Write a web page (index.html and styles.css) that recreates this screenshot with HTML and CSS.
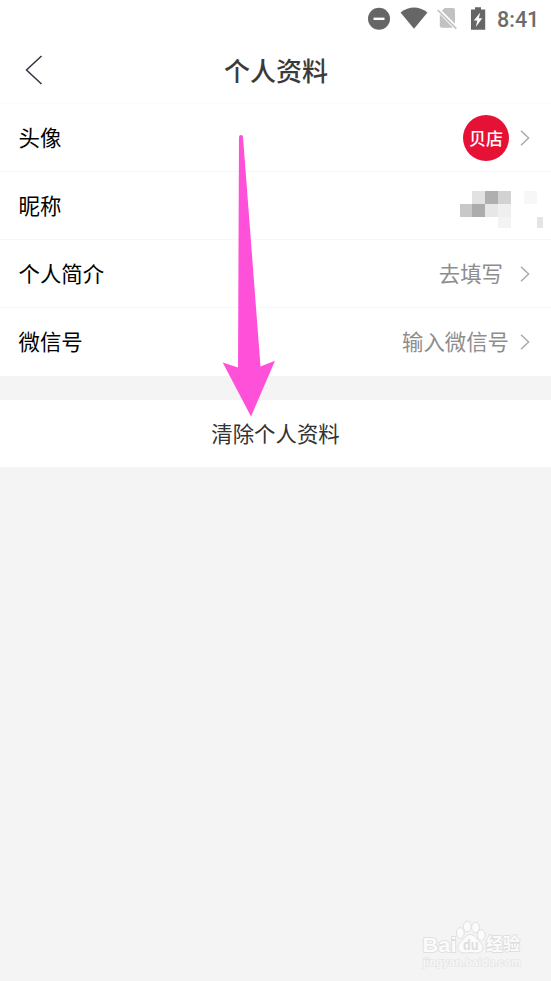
FILE: index.html
```html
<!DOCTYPE html>
<html lang="zh-CN">
<head>
<meta charset="utf-8">
<title>个人资料</title>
<link rel="stylesheet" href="styles.css">
</head>
<body>
<div class="screen">
  <div class="status">
    <svg class="status-icons" width="120" height="38" viewBox="367 0 120 38">
      <circle cx="379" cy="18.800" r="11" fill="#666"/>
      <path d="M373.500 18.800h11" stroke="#fff" stroke-width="2.400"/>
      <path d="M400.500 12.400Q414 2.800 427.500 12.400L414 28.800Z" fill="#666"/>
      <path d="M444.500 8H453q2 0 2 2v14.200L441.800 11zM439.800 14.200L453 27.800H442q-2.200 0-2.200-2z" fill="#c2c2c2"/>
      <path d="M438.500 8.500L458 28" stroke="#fff" stroke-width="1.600"/>
      <path d="M437.600 10L456.300 28.600" stroke="#c2c2c2" stroke-width="1.700"/>
      <path d="M475 7.300h6v2.200h4.200v20.200H471V9.500h4z" fill="#666"/>
      <path d="M480.300 12.500L473.800 20.500h3.500l-1.500 6.500 6.500-8.700h-3.500z" fill="#fff"/>
    </svg>
    <span class="clock">8:41</span>
  </div>
  <header class="header">
    <svg class="back" width="18" height="30" viewBox="0 0 18 30"><path d="M16.500 1L1.500 15L16.500 29" fill="none" stroke="#303642" stroke-width="1.500"/></svg>
    <h1 class="title">个人资料</h1>
  </header>
  <main>
    <div class="row first">
      <span class="label">头像</span>
      <span class="avatar">贝店</span>
      <svg class="chevron" width="10" height="16" viewBox="0 0 10 16"><path d="M1 .800L8.600 8L1 15.200" /></svg>
    </div>
    <div class="row nick">
      <span class="label">昵称</span>
      <svg class="mosaic" width="83" height="37" viewBox="460 191 83 37" shape-rendering="crispEdges">
        <path fill="#e2e2e2" d="M472 191h13v13h-13z"/><path fill="#afafaf" d="M485 191h13v13h-13z"/>
        <path fill="#d2d2d2" d="M498 191h13v13h-13z"/><path fill="#f7f7f7" d="M524 191h13v13h-13z"/>
        <path fill="#c8c8c8" d="M460 204h12v13h-12z"/><path fill="#acacac" d="M472 204h13v13h-13z"/>
        <path fill="#e7e7e7" d="M485 204h13v13h-13z"/><path fill="#efefef" d="M498 204h13v13h-13z"/>
        <path fill="#f3f3f3" d="M498 217h13v11h-13z"/><path fill="#e4e4e4" d="M537 217h6v11h-6z"/>
      </svg>
    </div>
    <div class="row">
      <span class="label">个人简介</span>
      <span class="value">去填写</span>
      <svg class="chevron" width="10" height="16" viewBox="0 0 10 16"><path d="M1 .800L8.600 8L1 15.200" /></svg>
    </div>
    <div class="row last">
      <span class="label">微信号</span>
      <span class="value input">输入微信号</span>
      <svg class="chevron" width="10" height="16" viewBox="0 0 10 16"><path d="M1 .800L8.600 8L1 15.200" /></svg>
    </div>
    <div class="clear">清除个人资料</div>
  </main>
  <svg class="arrow" width="53" height="283" viewBox="222 134 53 283"><path d="M239 137Q239 135 241 135Q243 135 243 137L260.500 366.500L275 360.700L251 416.500L222.700 362.500L238 367.500Z" fill="#ff50da"/></svg>
  <svg class="watermark" width="106" height="52" viewBox="418 918 106 52">
    <g fill="#fbfbfb" stroke="#e0e0e0" stroke-width="1">
      <ellipse cx="460.300" cy="933" rx="3.900" ry="5.300"/><ellipse cx="467.300" cy="926.500" rx="3.900" ry="5.300"/>
      <ellipse cx="475.500" cy="927.500" rx="3.900" ry="5.300"/><ellipse cx="481.300" cy="935" rx="4" ry="5.300"/>
      <path d="M470 934.500c4.500 0 6 4 9.500 7c6 5 4 12-4 11.500q-5-1-10 0c-8 .500-10-6-5-11c3.500-3 5-7.500 9.500-7.500z"/>
    </g>
    <g class="mark-text">
      <text x="422.500" y="951.500" font-size="20.500" textLength="34" lengthAdjust="spacingAndGlyphs">Bai</text>
      <text class="du" x="463" y="950" font-size="14.500" textLength="15.500" lengthAdjust="spacingAndGlyphs">du</text>
      <text x="486" y="950" font-size="17.500" textLength="34" lengthAdjust="spacingAndGlyphs">经验</text>
      <text class="url" x="423" y="965.500" font-size="10.500" textLength="98" lengthAdjust="spacingAndGlyphs">jingyan.baidu.com</text>
    </g>
  </svg>
</div>
</body>
</html>
```
FILE: styles.css
```css
* { box-sizing: border-box; }
body {
  margin: 0;
  background: #f4f4f4;
  font-family: "Noto Sans CJK SC", sans-serif;
}
.screen {
  position: relative;
  height: 981px;
  overflow: hidden;
}
.status {
  height: 38px;
  display: flex;
  align-items: center;
  justify-content: flex-end;
  gap: 10px;
  padding-right: 12px;
  background: #fff;
}
.status-icons { display: block; }
.clock {
  width: 42px;
  padding-top: 1px;
  font: 500 21.5px/38px Roboto, sans-serif;
  color: #6c6c6c;
  white-space: nowrap;
}
.header {
  height: 65px;
  display: flex;
  align-items: center;
  padding: 0 0 2px 25px;
  background: #fff;
}
.back { display: block; }
.title {
  flex: 1;
  margin: 0 42px 0 0;
  text-align: center;
  font-size: 26px;
  line-height: 38px;
  font-weight: 500;
  color: #3a3a3a;
}
.row {
  height: 68px;
  display: flex;
  align-items: center;
  padding: 0 21px 0 18.500px;
  border-top: 1px solid #f7f7f7;
  background: #fff;
  font-size: 21.4px;
  line-height: 32px;
}
.row.first { border-top-color: #fcfcfc; }
.row.last { height: 69px; }
.row.nick { padding-right: 8px; }
.label {
  flex: 1;
  padding-bottom: 2px;
  color: #000;
}
.value {
  margin-right: 17px;
  padding-bottom: 2px;
  color: #8d8d8d;
}
.value.input { margin-right: 11px; }
.mosaic { margin-top: 7px; }
.chevron {
  fill: none;
  stroke: #aaa;
  stroke-width: 1.5;
}
.avatar {
  width: 46px;
  height: 46px;
  margin-right: 11px;
  border-radius: 50%;
  background: #e61236;
  color: #fff;
  font-size: 17px;
  line-height: 45px;
  font-weight: 500;
  text-align: center;
}
.clear {
  height: 67px;
  margin-top: 24px;
  background: #fff;
  color: #333;
  font-size: 21.4px;
  line-height: 65px;
  text-align: center;
}
.arrow {
  position: absolute;
  left: 222px;
  top: 134px;
}
.watermark {
  position: absolute;
  left: 418px;
  top: 918px;
}
.mark-text {
  font-family: "Liberation Sans", "Noto Sans CJK SC", sans-serif;
  font-weight: 700;
  fill: #fbfbfb;
  stroke: #dcdcdc;
  stroke-width: 1.6px;
  paint-order: stroke;
}
.mark-text .du {
  fill: #dedede;
  stroke: none;
}
.mark-text .url {
  font-weight: 700;
  fill: #f8f8f8;
  stroke: #e2e2e2;
  stroke-width: 1.2px;
}
```
